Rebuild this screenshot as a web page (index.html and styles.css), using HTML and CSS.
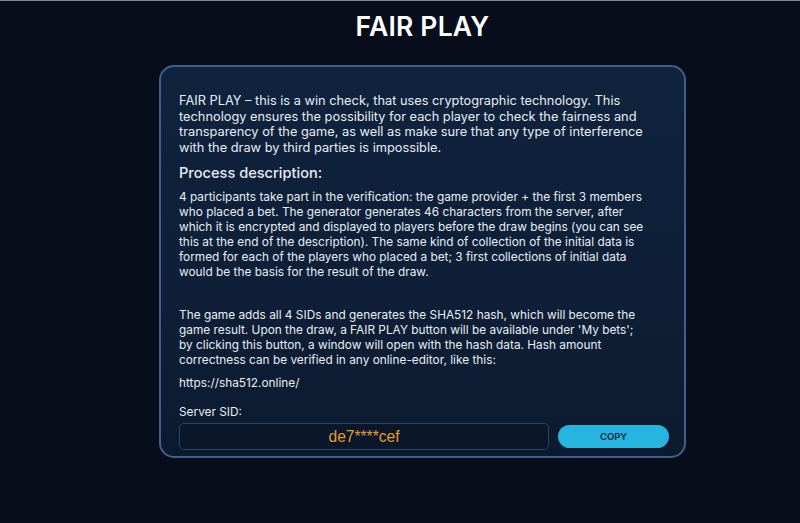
FILE: index.html
```html
<!DOCTYPE html>
<html lang="en">
<head>
    <meta charset="UTF-8">
    <meta name="viewport" content="width=device-width, initial-scale=1.0">
    <title>Fair Play</title>
    <link rel="stylesheet" href="styles.css">
</head>
<body>
    <div class="page">
        <h1 class="title">FAIR PLAY</h1>

        <div class="card">
            <p class="intro">FAIR PLAY – this is a win check, that uses cryptographic technology. This technology ensures the possibility for each player to check the fairness and transparency of the game, as well as make sure that any type of interference with the draw by third parties is impossible.</p>

            <h2 class="subtitle">Process description:</h2>

            <p class="text">4 participants take part in the verification: the game provider + the first 3 members<br>
                who placed a bet. The generator generates 46 characters from the server, after<br>
                which it is encrypted and displayed to players before the draw begins (you can see<br>
                this at the end of the description). The same kind of collection of the initial data is<br>
                formed for each of the players who placed a bet; 3 first collections of initial data<br>
                would be the basis for the result of the draw.</p>

            <p class="text gap">The game adds all 4 SIDs and generates the SHA512 hash, which will become the<br>
                game result. Upon the draw, a FAIR PLAY button will be available under 'My bets';<br>
                by clicking this button, a window will open with the hash data. Hash amount<br>
                correctness can be verified in any online-editor, like this:</p>

            <p class="text link">https://sha512.online/</p>

            <p class="text label">Server SID:</p>

            <div class="sid-row">
                <div class="sid-box">de7****cef</div>
                <button class="copy-btn">COPY</button>
            </div>
        </div>
    </div>
</body>
</html>
```

FILE: styles.css
```css
html {
    background: #070d1b;
}

body {
    margin: 0;
    min-height: 522px;
    background: #070d1b;
    border-top: 1px solid #80858f;
    font-family: "Inter", "Open Sans", sans-serif;
    color: #e8edf4;
}

.page {
    display: flex;
    flex-direction: column;
    align-items: center;
    padding-left: 45px;
}

.title {
    margin: 9px 0 0 0;
    font-size: 26.5px;
    font-weight: 600;
    color: #ffffff;
    letter-spacing: 0.2px;
}

.card {
    box-sizing: border-box;
    width: 527px;
    margin-top: 23px;
    padding: 26px 15px 6px 18px;
    border: 2px solid #3f5f8c;
    border-radius: 15px;
    background: linear-gradient(180deg, #10233d 0%, #0e1f37 60%, #0c1a2f 100%);
}

.intro {
    margin: 0;
    font-size: 12.8px;
    line-height: 15.5px;
}

.subtitle {
    margin: 9px 0 8px 0;
    font-size: 14.6px;
    font-weight: 500;
}

.text {
    margin: 0;
    font-size: 11.85px;
    line-height: 15px;
}

.gap {
    margin-top: 28px;
}

.link {
    margin-top: 8px;
}

.label {
    margin-top: 14px;
}

.sid-row {
    display: flex;
    align-items: center;
    gap: 9px;
    margin-top: 3px;
}

.sid-box {
    flex: 1;
    height: 25px;
    line-height: 25px;
    border: 1px solid #2c4263;
    border-radius: 5px;
    background: #0a1629;
    text-align: center;
    font-family: "Liberation Sans", Arial, sans-serif;
    font-size: 15.6px;
    color: #e39d2c;
}

.copy-btn {
    width: 111px;
    height: 23px;
    border: none;
    border-radius: 12px;
    background: #25b5de;
    color: #0b2233;
    font-family: "Inter", sans-serif;
    font-size: 9.5px;
    font-weight: 600;
}
```
